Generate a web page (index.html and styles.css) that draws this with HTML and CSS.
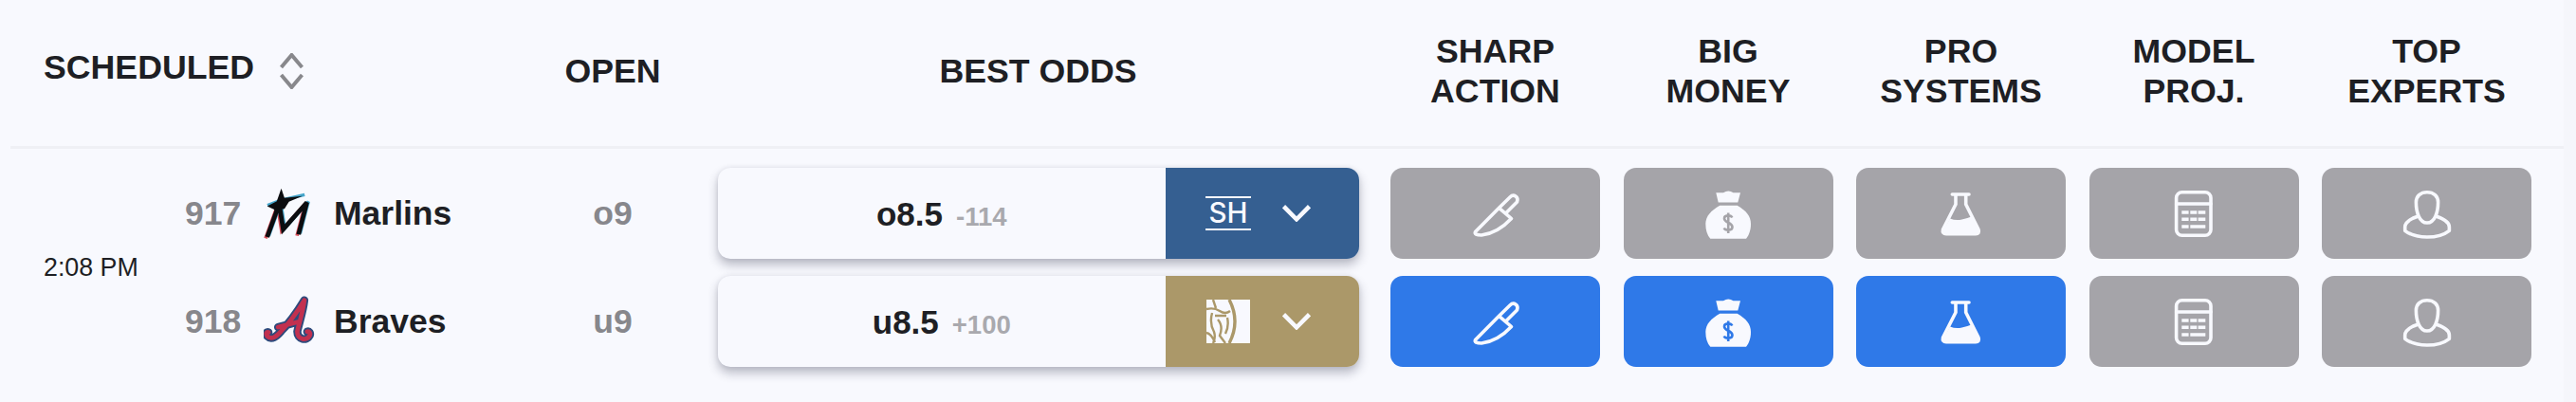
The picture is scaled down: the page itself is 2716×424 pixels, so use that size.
FILE: index.html
```html
<!DOCTYPE html>
<html lang="en">
<head>
<meta charset="utf-8">
<title>Scheduled games</title>
<link rel="stylesheet" href="styles.css">
</head>
<body>
<svg class="defs" width="0" height="0" aria-hidden="true">
  <symbol id="knife" viewBox="0 0 56 56">
    <path class="line" d="M6.5 47.5 31.5 22.3 43 11Q46 8 49 10 52 12 50.5 16L39.5 27M31.5 22.3 44.5 33.5Q30 49 13 51 5 51 6.5 47.5Z"/>
  </symbol>
  <symbol id="bag" viewBox="0 0 56 56">
    <path class="solid" d="M15.3 6.3 23 6.3Q28.3 2.8 33.5 6.3L41 6.3 38.3 16.5 17.7 16.5Z"/>
    <path class="solid" d="M19.3 19.7 37.7 19.7C47 25 52 31 52 39 52 46 50 51 47 54.7L9.3 54.7C6 51 4.3 46 4.3 39 4.3 31 10 25 19.3 19.7Z"/>
    <path class="cut" d="M32.3 32.5C31 29.5 24 29.5 24 33.5 24 38 32.5 37.5 32.5 42.5 32.5 46.5 25 46.5 23.7 43.5M28.2 27.5V49"/>
  </symbol>
  <symbol id="flask" viewBox="0 0 56 56">
    <path class="line" d="M18.3 8H36M22 8V18.5L8.5 45Q7.5 49.7 12 49.7H43Q47.5 49.7 46 45L32.7 18.5V8"/>
    <path class="solid" d="M16 33.5Q22 36 28.5 34.5T38.5 31.5L46 46 44 49.7H11L9 46Z"/>
  </symbol>
  <symbol id="calc" viewBox="0 0 56 56">
    <rect class="line" x="9.6" y="5.7" width="36.4" height="45.6" rx="6"/>
    <path class="line" d="M9.6 18H46"/>
    <path class="cells" d="M15.3 27h7.3M24.3 27h7M32.6 27h7.7M15.3 34.3h7.3M24.3 34.3h7M32.6 34.3h7.7M15.3 42h7.3M24.3 42h16"/>
  </symbol>
  <symbol id="person" viewBox="0 0 56 56">
    <path class="line" d="M28 5.7C21 5.7 16.4 10 16.4 16.3 16.4 27 20 38 28 38 36 38 39.6 27 39.6 16.3 39.6 10 35 5.7 28 5.7Z"/>
    <path class="line" d="M18 31.3C10 34 4.7 37 4.7 42.5V46.3Q13 53 28 53 43 53 51.4 46.3V42.5C51.4 37 46 34 38 31.3"/>
  </symbol>
  <symbol id="chev" viewBox="0 0 30 18">
    <path class="chev-line" d="M1.5 1.7 15 15.3 28.5 1.7"/>
  </symbol>
</svg>

<main class="board">
  <header class="grid head">
    <div class="head-sched">
      <span class="head-label">SCHEDULED</span>
      <svg class="sort" viewBox="0 0 25 38" width="25" height="38"><path d="M1.5 15 12.5 2 23.5 15M1.5 23 12.5 36 23.5 23"/></svg>
    </div>
    <div class="head-cell">OPEN</div>
    <div class="head-cell head-odds">BEST ODDS</div>
    <div class="head-cell">SHARP<br>ACTION</div>
    <div class="head-cell">BIG<br>MONEY</div>
    <div class="head-cell">PRO<br>SYSTEMS</div>
    <div class="head-cell">MODEL<br>PROJ.</div>
    <div class="head-cell">TOP<br>EXPERTS</div>
  </header>

  <section class="grid game">
    <div class="sched">
      <div class="time">2:08 PM</div>
      <div class="teams">
        <div class="team">
          <span class="rot">917</span>
          <svg class="logo" viewBox="55 30 160 160" width="54" height="54">
            <g class="m-red" transform="translate(-5 4)"><path d="M98 96 66 184M106 96 116 160 190 76 164 176"/></g>
            <g class="m-blue" transform="translate(5 -3)"><path d="M98 96 66 184M106 96 116 160 190 76 164 176M62 88 104 72 178 55"/></g>
            <g class="m-black"><path d="M98 96 66 184M106 96 116 160 190 76 164 176"/></g>
            <path class="m-fill" d="M110 32 120 62 176 56 134 74 120 96 104 98 94 118 88 98 66 88 96 72Z"/>
          </svg>
          <span class="name">Marlins</span>
        </div>
        <div class="team">
          <span class="rot">918</span>
          <svg class="logo" viewBox="55 370 160 160" width="54" height="54">
            <path class="a-navy" d="M182 384C160 420 138 452 110 480 96 496 80 510 66 496 60 488 64 482 70 484M182 384C178 420 164 460 160 482 160 508 190 512 199 494 202 486 197 480 191 482M100 468 168 450"/>
            <path class="a-red" d="M182 384C160 420 138 452 110 480 96 496 80 510 66 496 60 488 64 482 70 484M182 384C178 420 164 460 160 482 160 508 190 512 199 494 202 486 197 480 191 482M100 468 168 450"/>
          </svg>
          <span class="name">Braves</span>
        </div>
      </div>
    </div>

    <div class="open">o9</div>
    <div class="odds-cell">
      <div class="odds">
        <div class="odds-main"><b class="line-val">o8.5</b><span class="price">-114</span></div>
        <div class="book book-sh">
          <div class="sh">SH</div>
          <svg class="chev" width="30" height="18"><use href="#chev"/></svg>
        </div>
      </div>
    </div>
    <div class="btn off"><svg class="ico"><use href="#knife"/></svg></div>
    <div class="btn off"><svg class="ico"><use href="#bag"/></svg></div>
    <div class="btn off"><svg class="ico"><use href="#flask"/></svg></div>
    <div class="btn off"><svg class="ico"><use href="#calc"/></svg></div>
    <div class="btn off"><svg class="ico"><use href="#person"/></svg></div>

    <div class="open">u9</div>
    <div class="odds-cell">
      <div class="odds">
        <div class="odds-main"><b class="line-val">u8.5</b><span class="price">+100</span></div>
        <div class="book book-mgm">
          <svg class="mgm" viewBox="0 0 46 46" width="46" height="46">
            <rect class="mgm-w" width="46" height="46"/>
            <path class="mgm-s" d="M7 0 10 9M0 10Q8 8 14 12T25 12M9 17H21M6 14Q3 25 8 34 10 40 7 46M12 21Q18 28 14 38L20 46M22 19Q24 28 20 36M0 35Q5 36 9 45"/>
            <path class="mgm-c" d="M24 0Q36 23 24 46"/>
          </svg>
          <svg class="chev" width="30" height="18"><use href="#chev"/></svg>
        </div>
      </div>
    </div>
    <div class="btn on"><svg class="ico"><use href="#knife"/></svg></div>
    <div class="btn on"><svg class="ico"><use href="#bag"/></svg></div>
    <div class="btn on"><svg class="ico"><use href="#flask"/></svg></div>
    <div class="btn off"><svg class="ico"><use href="#calc"/></svg></div>
    <div class="btn off"><svg class="ico"><use href="#person"/></svg></div>
  </section>
</main>
</body>
</html>
```
FILE: styles.css
```css
* { box-sizing: border-box; }

html, body { margin: 0; height: 100%; }

body {
  background: #f5f6fb;
  color: #1e1f24;
  font-family: "Liberation Sans", Arial, sans-serif;
  overflow: hidden;
}

.defs { position: absolute; }

.board {
  width: 2703px;
  height: 424px;
  background: #f8f9fe;
  padding-left: 11px;
}

.grid {
  display: grid;
  grid-template-columns: 524.5px 172px 685px repeat(5, 221px);
  column-gap: 24.5px;
}

/* Header */
.head {
  height: 157px;
  padding-bottom: 4px;
  align-items: center;
  border-bottom: 3px solid #eff0f5;
  font-size: 35.7px;
  font-weight: 700;
  line-height: 42.5px;
  text-align: center;
}

.head-sched {
  display: flex;
  align-items: center;
  gap: 27px;
  padding-left: 35px;
}

.head-label { margin-bottom: 7px; }

.sort { fill: none; stroke: #88888c; stroke-width: 4; }

.head-odds { padding-right: 9px; }

/* Game */
.game {
  grid-template-rows: 96px 96px;
  row-gap: 18px;
  padding-top: 20px;
  align-items: center;
}

.sched {
  grid-row: 1 / 3;
  display: flex;
  align-items: center;
  padding-left: 35px;
}

.time { width: 149px; font-size: 26.8px; }

.teams { display: flex; flex-direction: column; gap: 18px; }

.team {
  display: flex;
  align-items: center;
  height: 96px;
  font-size: 35.5px;
  font-weight: 700;
}

.rot { width: 83px; color: #87878c; }
.logo { flex: none; margin-right: 20px; }

.open {
  text-align: center;
  font-size: 35.5px;
  font-weight: 700;
  color: #87878c;
}

.odds-cell { padding-right: 9px; }

.odds {
  display: flex;
  height: 96px;
  border-radius: 13px;
  background: #f8f9fe;
  box-shadow: 0 6px 11px rgba(50, 52, 75, .33), 0 0 5px rgba(50, 52, 75, .08);
}

.odds-main {
  flex: 1;
  display: flex;
  align-items: baseline;
  justify-content: center;
  gap: 14px;
  padding-top: 29px;
}

.line-val { font-size: 35px; }
.price { font-size: 27.5px; font-weight: 700; color: #a9a9ae; }

.book {
  flex: none;
  width: 203.5px;
  display: flex;
  align-items: center;
  gap: 33px;
  padding-left: 42px;
  border-radius: 0 13px 13px 0;
}

.book-sh { background: #355f91; }
.book-mgm { background: #ab9869; }

.sh {
  width: 48px;
  height: 36px;
  border-top: 2.5px solid #f8f9fe;
  border-bottom: 2.5px solid #f8f9fe;
  color: #f8f9fe;
  font-family: Inter, "Liberation Sans", sans-serif;
  font-size: 29.5px;
  font-weight: 500;
  line-height: 31px;
  text-align: center;
}

.mgm { flex: none; margin-right: 1px; margin-left: 1px; }
.mgm-w { fill: #f8f9fe; }
.mgm-s { fill: none; stroke: #ab9869; stroke-width: 2.4; }
.mgm-c { fill: none; stroke: #ab9869; stroke-width: 3.4; }

.chev-line {
  fill: none;
  stroke: #f8f9fe;
  stroke-width: 4.5;
}

/* Signal buttons */
.btn {
  height: 96px;
  display: flex;
  align-items: center;
  justify-content: center;
  border-radius: 13px;
}

.off { background: #a5a4a9; --btn: #a5a4a9; }
.on { background: #2f79e8; --btn: #2f79e8; }

.ico { width: 56px; height: 56px; }

.line { fill: none; stroke: #f8f9fe; stroke-width: 3.6; stroke-linecap: round; stroke-linejoin: round; }
.solid { fill: #f8f9fe; }
.cut { fill: none; stroke: var(--btn); stroke-width: 2.6; }
.cells { fill: none; stroke: #f8f9fe; stroke-width: 3.4; }

/* Team marks */
.m-red { fill: none; stroke: #d8505a; stroke-width: 11; }
.m-blue { fill: none; stroke: #46a6cc; stroke-width: 10; }
.m-black { fill: none; stroke: #0c0d10; stroke-width: 14; }
.m-fill { fill: #0c0d10; }
.a-navy { fill: none; stroke: #2d4a7c; stroke-width: 25; stroke-linecap: round; }
.a-red { fill: none; stroke: #c2304f; stroke-width: 14; stroke-linecap: round; }
```
